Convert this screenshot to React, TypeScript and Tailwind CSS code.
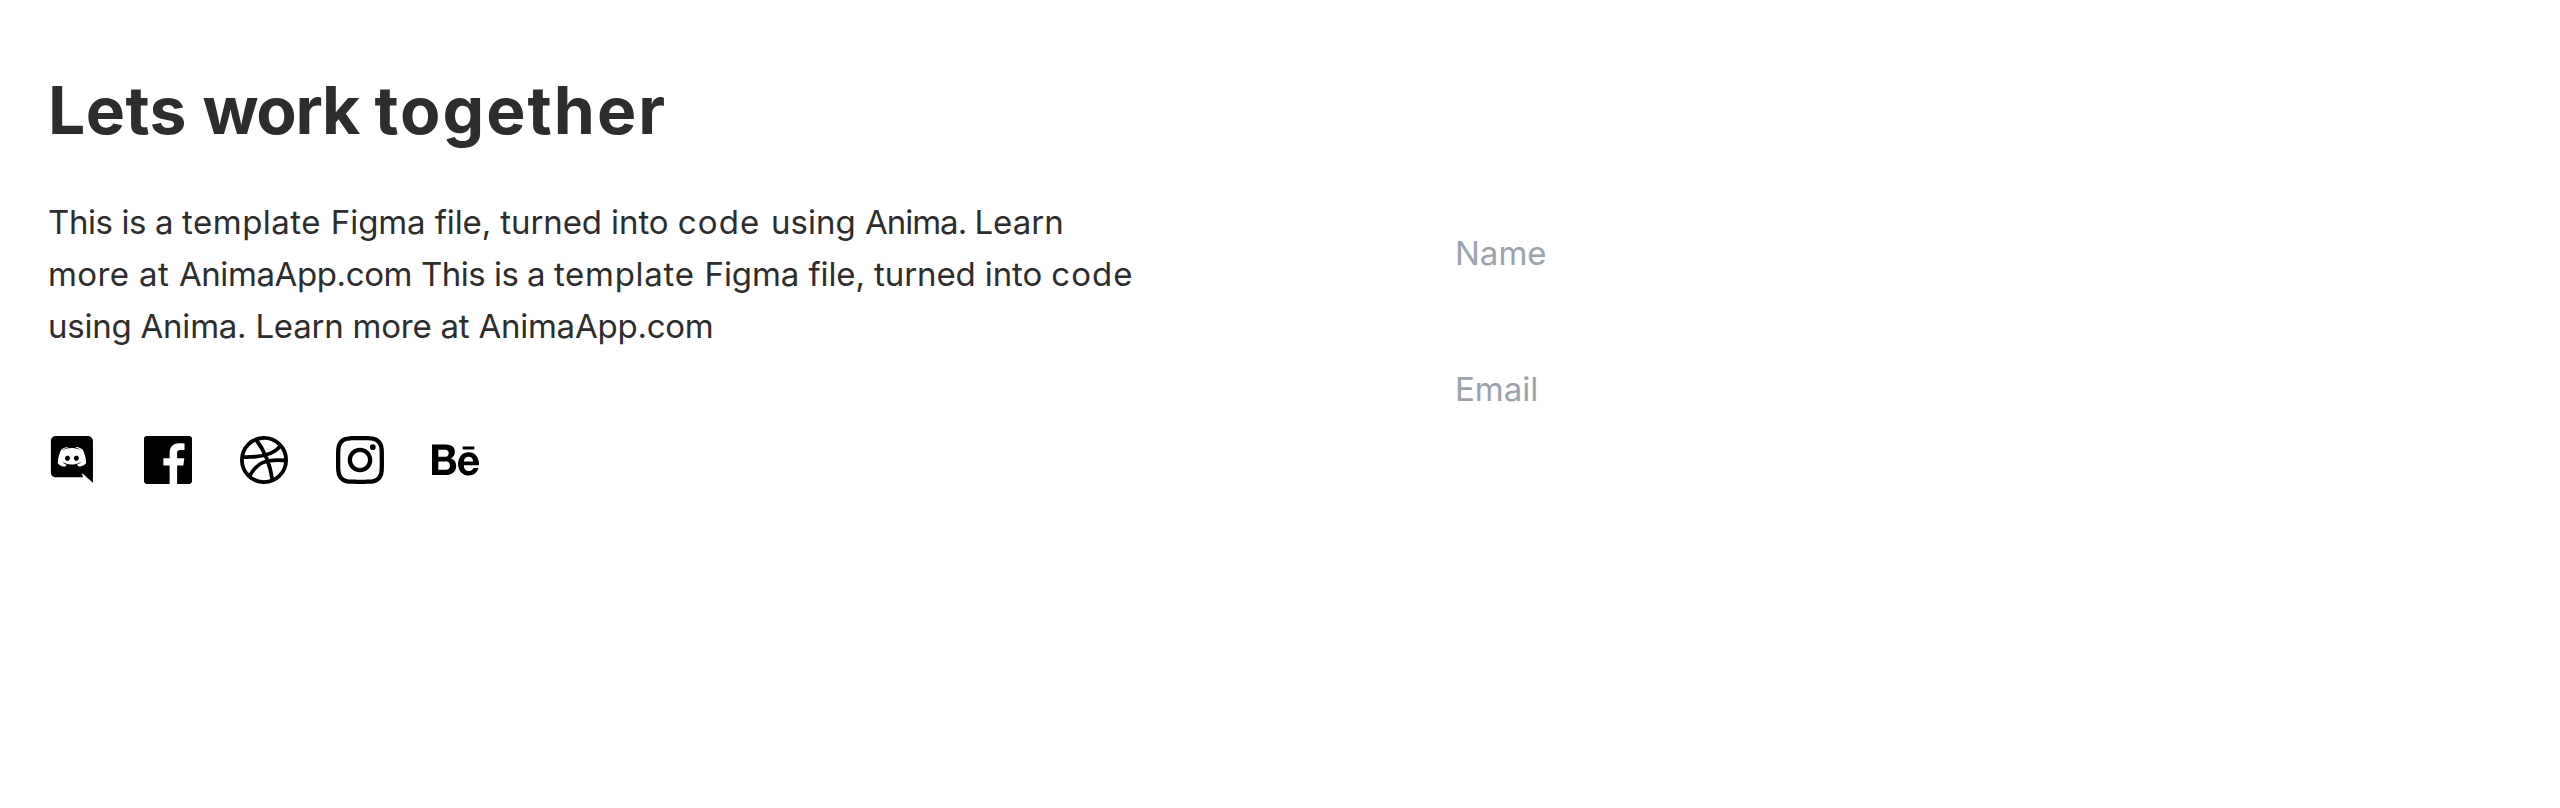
import { SiBehance, SiInstagram } from "react-icons/si";

function DiscordIcon() {
  return (
    <svg viewBox="-0.3 0 24.7 24.7" className="size-12" fill="currentColor" aria-hidden="true">
      <path d="M20.222 0c1.406 0 2.54 1.137 2.607 2.475V24l-2.677-2.273-1.47-1.338-1.604-1.398.666 2.205H3.71c-1.402 0-2.54-1.065-2.54-2.476V2.48C1.17 1.142 2.31.003 3.715.003h16.5L20.222 0zm-6.118 5.683h-.03l-.202.2c2.073.6 3.076 1.537 3.076 1.537-1.336-.668-2.54-1.002-3.744-1.137-.87-.135-1.74-.064-2.475 0h-.2c-.47 0-1.47.2-2.81.735-.467.203-.735.336-.735.336s1.002-1.002 3.21-1.537l-.135-.135s-1.672-.064-3.477 1.27c0 0-1.805 3.144-1.805 7.02 0 0 1 1.74 3.743 1.806 0 0 .4-.533.805-1.002-1.54-.468-2.14-1.404-2.14-1.404s.134.066.335.2h.06c.03 0 .044.015.06.03v.006c.016.016.03.03.06.03.33.136.66.27.93.4.466.202 1.065.403 1.8.536.93.135 1.996.2 3.21 0 .6-.135 1.2-.267 1.8-.535.39-.2.87-.4 1.397-.737 0 0-.6.936-2.205 1.404.33.466.795 1 .795 1 2.744-.06 3.81-1.8 3.87-1.726 0-3.87-1.815-7.02-1.815-7.02-1.635-1.214-3.165-1.26-3.435-1.26l.056-.02zm.168 4.413c.703 0 1.27.6 1.27 1.335 0 .74-.57 1.34-1.27 1.34-.7 0-1.27-.6-1.27-1.334.002-.74.573-1.338 1.27-1.338zm-4.543 0c.7 0 1.266.6 1.266 1.335 0 .74-.57 1.34-1.27 1.34-.7 0-1.27-.6-1.27-1.334 0-.74.57-1.338 1.27-1.338z" />
    </svg>
  );
}

function FacebookIcon() {
  return (
    <svg viewBox="0 0 24 24" className="size-12" fill="currentColor" aria-hidden="true">
      <path d="M22.676 0H1.324C.593 0 0 .593 0 1.324v21.352C0 23.408.593 24 1.324 24h11.494v-9.294H9.689v-3.621h3.129V8.41c0-3.099 1.894-4.785 4.659-4.785 1.325 0 2.464.097 2.796.141v3.24h-1.921c-1.5 0-1.792.721-1.792 1.771v2.311h3.584l-.465 3.63H16.56V24h6.115c.733 0 1.325-.592 1.325-1.324V1.324C24 .593 23.408 0 22.676 0" />
    </svg>
  );
}

function DribbbleIcon() {
  return (
    <svg viewBox="0 0 48 48" className="size-12" fill="none" stroke="currentColor" strokeWidth="3.8" aria-hidden="true">
      <circle cx="24" cy="24" r="22.1" />
      <path d="M16 3.5C24 14 30 27 32.5 44.5M2 21C18 21.5 34 19.5 41 9M9.5 40C17 27 25 22.5 46 24.5" />
    </svg>
  );
}

export default function App() {
  return (
    <main className="flex h-[808px] w-full overflow-hidden bg-white font-['Inter',sans-serif]">
      <section className="flex w-[1360px] flex-col pl-12 pt-[71px] text-[#2d2d2d]">
        <h1 className="whitespace-nowrap text-[66px] font-bold leading-[78px]">
          <span className="tracking-[0.4px]">Lets</span> <span className="tracking-[-1.4px]">work</span>{" "}
          <span className="tracking-[2px]">together</span>
        </h1>
        <p className="mt-[47px] whitespace-nowrap text-[33px] leading-[52px]">
          <span className="block">
            <span className="tracking-[-0.4px]">This is a </span>
            <span className="tracking-[0.5px]">template </span>
            <span className="tracking-[-0.1px]">Figma file, turned into </span>
            <span className="tracking-[1.2px]">code </span>using <span className="tracking-[-1px]">Anima. </span>Learn
          </span>
          <span className="block">
            <span className="tracking-[0.4px]">more at </span>
            <span className="tracking-[-0.4px]">AnimaApp.com </span>
            <span className="tracking-[-0.5px]">This is a </span>
            <span className="tracking-[0.7px]">template </span>
            <span className="tracking-[-0.1px]">Figma file, turned into </span>
            <span className="tracking-[1px]">code</span>
          </span>
          <span className="block tracking-[-0.23px]">using Anima. Learn more at AnimaApp.com</span>
        </p>
        <div className="mt-[84px] flex gap-12 text-black">
          <DiscordIcon />
          <FacebookIcon />
          <DribbbleIcon />
          <SiInstagram className="size-12" />
          <SiBehance className="h-12 w-[47px]" />
        </div>
      </section>
      <form className="flex flex-1 flex-col gap-8 pl-[95px] pt-[201px] text-[33px] leading-[52px] text-[#9ca3af]">
        <label className="flex h-[104px] items-center">Name</label>
        <label className="flex h-[104px] items-center">Email</label>
      </form>
    </main>
  );
}
